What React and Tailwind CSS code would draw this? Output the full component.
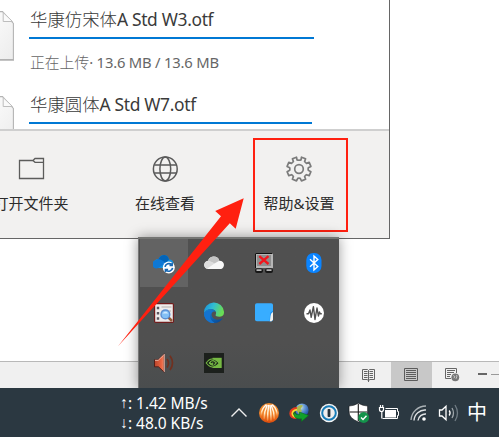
import React from "react";

const FONT = "font-['Noto_Sans','Noto_Sans_CJK_SC',sans-serif]";

function FileIcon() {
  return (
    <svg width="15" height="50" viewBox="0 0 15 50" className="block shrink-0">
      <defs>
        <linearGradient id="paper" x1="0" y1="0" x2="1" y2="1">
          <stop offset="0" stopColor="#fff" />
          <stop offset="1" stopColor="#ececec" />
        </linearGradient>
      </defs>
      <path d="M-20 .6H2.5L13.4 12.5V48.5H-20z" fill="url(#paper)" stroke="#b4b4b4" strokeWidth="1.1" />
      <path d="M3.2 1.5V10.5H12.5z" fill="#fafafa" stroke="#bdbdbd" strokeWidth="1" />
      <path d="M-2 49.2H14" stroke="#aaa" strokeWidth="1" />
    </svg>
  );
}

function FileName({ cjk, latin }) {
  return (
    <div className="h-[26px] text-[17.4px] leading-[26px] whitespace-nowrap text-[#3a3a3a]">
      <span className="font-light">{cjk}</span>
      <span className="tracking-[-0.33px]">{latin}</span>
    </div>
  );
}

function FolderIcon() {
  return (
    <svg width="28" height="28" viewBox="0 0 28 28" fill="none" stroke="#5c5c5b" strokeWidth="1.3">
      <path d="M2.5 5.5H16L18 3.5H26.5V23.5H2.5z" />
      <path d="M16 5.5L18 7.3H26.5" />
    </svg>
  );
}

function GlobeIcon() {
  return (
    <svg width="28" height="28" viewBox="0 0 28 28" fill="none" stroke="#5a5a5a" strokeWidth="1.5">
      <circle cx="14.3" cy="14" r="11.9" />
      <ellipse cx="14.3" cy="14" rx="5.4" ry="11.9" />
      <path d="M3.3 10H25.3M3.3 18H25.3" />
    </svg>
  );
}

function GearIcon() {
  return (
    <svg width="28" height="28" viewBox="0 0 28 28" fill="none" stroke="#7b7b7b" strokeWidth="1.7" strokeLinejoin="round">
      <path d="M11.5 2.2L12 4.9Q14 5.6 16 4.9L16.5 2.2L20.6 3.8L19.6 6.5Q20.5 7.6 21.5 8.4L24.2 7.4L25.9 11.4L23.3 12.8Q22.9 14 23.3 15.3L25.9 16.7L24.2 20.6L21.4 19.7Q20.4 20.5 19.6 21.5L20.6 24.3L16.5 25.9L15.2 23.3Q14 22.9 12.8 23.3L11.5 25.9L7.4 24.3L8.4 21.5Q7.6 20.5 6.6 19.7L3.8 20.6L2.1 16.7L4.7 15.3Q5.1 14 4.7 12.8L2.1 11.4L3.8 7.4L6.5 8.4Q7.5 7.6 8.4 6.5L7.4 3.8z" />
      <circle cx="14" cy="14" r="4.3" />
    </svg>
  );
}

function FooterAction({ icon, label }) {
  return (
    <div className="flex h-[94px] w-[94px] shrink-0 flex-col items-center pt-[17px]">
      {icon}
      <span className="mt-[9px] text-[15px] leading-[22px] whitespace-nowrap text-[#2b2b2b]">{label}</span>
    </div>
  );
}

function Panel() {
  return (
    <section className="flex h-[239px] w-[390px] flex-col overflow-hidden border-r border-b border-[#666] bg-white">
      <div className="flex h-[129px] flex-col overflow-hidden">
        <div className="flex h-[85px] shrink-0 pt-[6px]">
          <div className="w-[29px] shrink-0 pt-[5px]"><FileIcon /></div>
          <div className="flex w-[285px] flex-col">
            <div className="pl-[1px]">
              <FileName cjk="华康仿宋体" latin="A Std W3.otf" />
            </div>
            <div className="mt-[5px] h-[2px] bg-[#0078d4]" />
            <div className="mt-[12px] h-[22px] pl-[1px] text-[14.8px] leading-[22px] whitespace-nowrap text-[#666]">
              <span className="font-light">正在上传</span><span className="tracking-[-0.2px]">· 13.6 MB / 13.6 MB</span>
            </div>
          </div>
        </div>
        <div className="flex h-[60px] shrink-0 pt-[6px]">
          <div className="w-[29px] shrink-0 pt-[5px]"><FileIcon /></div>
          <div className="flex w-[283px] flex-col">
            <div className="pl-[1px]">
              <FileName cjk="华康圆体" latin="A Std W7.otf" />
            </div>
            <div className="mt-[5px] h-[2px] bg-[#0078d4]" />
          </div>
        </div>
      </div>
      <footer className="flex h-[109px] border-t-2 border-[#cfcfcf] bg-[#f2f1f0] pt-[7px]">
        <div className="-ml-[16px] flex">
          <FooterAction icon={<FolderIcon />} label="打开文件夹" />
          <div className="ml-[40px]"><FooterAction icon={<GlobeIcon />} label="在线查看" /></div>
          <div className="ml-[41px] h-[94px] w-[95px] border-2 border-[#ff2010]">
            <div className="-mt-[2px] -ml-[3px]"><FooterAction icon={<GearIcon />} label="帮助&设置" /></div>
          </div>
        </div>
      </footer>
    </section>
  );
}

function Svg({ children }) {
  return <svg width="22" height="22" viewBox="0 0 22 22" className="block">{children}</svg>;
}

function OneDriveSync() {
  return (
    <Svg>
      <path d="M4 16A4 4 0 0 1 1.5 8.8C3 7 5 7 5.5 7C7.5 1.5 15 2 16 7.4C20 7.2 21.5 11 20 14L14 16z" fill="#1490df" />
      <path d="M5.5 7C8 1.5 15 2 16 7.4L13 11L4 7.4z" fill="#0364b8" />
      <path d="M1.5 8.8C5 6 8 7 13 11L5 16A4 4 0 0 1 1.5 8.8z" fill="#0f78d4" />
      <circle cx="15.8" cy="15.4" r="6" fill="#fff" />
      <g fill="none" stroke="#1768b4" strokeWidth="1.7">
        <path d="M12 14.9A3.9 3.9 0 0 1 18.6 12.7M19.6 15.9A3.9 3.9 0 0 1 13 18.1" />
        <path d="M19.1 10.7V13.3H16.5M12.5 20.1V17.5H15.1" />
      </g>
    </Svg>
  );
}

function Cloud() {
  return (
    <Svg>
      <path d="M5 17A4 4 0 0 1 1.5 11.5C2.5 9 5 8.8 5 8.8C7 3 15 3.4 16.3 8.7C20 8.7 21.5 11.5 20.8 14C20.2 16.5 18.5 17 17 17z" fill="#f8f8f8" />
      <path d="M5 8.8C7 3 15 3.4 16.3 8.7L11.5 11.5z" fill="#c5c5c5" />
      <path d="M1.5 11.5C3 8 7.5 8.3 11.5 11.5L4 16.8C1.5 16 .8 13.5 1.5 11.5z" fill="#dedede" />
    </Svg>
  );
}

function NetworkError() {
  return (
    <Svg>
      <path d="M2 1H20V16H2z" fill="#b5b5b5" />
      <path d="M2.5 16V1.5H19.5" fill="none" stroke="#111" />
      <path d="M4 3H18V14H4z" fill="#8e8e8e" />
      <path d="M6.3 4.2L15.5 12M15.5 4.2L6.3 12" stroke="#f3151b" strokeWidth="2.3" />
      <rect x="2" y="16.5" width="8" height="4.5" rx="2" fill="#171717" />
      <rect x="12" y="16.5" width="8" height="4.5" rx="2" fill="#171717" />
      <path d="M3.5 18.2H8.5M13.5 18.2H18.5" stroke="#b5b5b5" strokeWidth="1.8" />
    </Svg>
  );
}

function Bluetooth() {
  return (
    <Svg>
      <rect x="3.3" y="1" width="15.2" height="20" rx="7" fill="#0a84ff" />
      <path d="M7 7.3L14.8 14.5L11 18V4L14.8 7.5L7 14.7" fill="none" stroke="#fff" strokeWidth="1.4" />
    </Svg>
  );
}

function ListSearch() {
  return (
    <Svg>
      <rect x="1.6" y="1.6" width="18.8" height="18.8" rx="1" fill="#eeeceb" stroke="#701c1c" strokeWidth="1.2" />
      <path d="M3.8 6H6.2M3.8 11.2H6.2M3.8 16.5H6.2" stroke="#5a5560" strokeWidth="2.4" />
      <path d="M8.5 5H18.5M8.5 9H18" stroke="#b2adab" strokeWidth="1.1" />
      <path d="M15.5 15.5L19 19" stroke="#925c39" strokeWidth="2.5" />
      <circle cx="12.4" cy="12.4" r="4.4" fill="#83c0f5" stroke="#5a8ed2" strokeWidth="1.4" />
      <path d="M9.5 11.5C11 9.3 14 9.3 15.2 11.5z" fill="#d1eaff" />
    </Svg>
  );
}

function Edge() {
  return (
    <Svg>
      <defs>
        <linearGradient id="edgeTop" x1="0" y1="0" x2="1" y2=".3">
          <stop stopColor="#168de0" /><stop offset=".5" stopColor="#31bdd2" /><stop offset="1" stopColor="#69dc56" />
        </linearGradient>
        <linearGradient id="edgeBottom" x1="0" y1="0" x2="1" y2="1">
          <stop stopColor="#1988db" /><stop offset="1" stopColor="#07438f" />
        </linearGradient>
      </defs>
      <path d="M1 11A10 10 0 0 1 21 9.8C21.4 14 17.5 15.7 13.5 14.3C11.5 13.5 13.5 12.5 13 10.3C12.2 6.5 4 5.5 1 11z" fill="url(#edgeTop)" />
      <path d="M1 11C3 5.5 11.7 5.9 13 10C9.5 8.2 7.4 12 9.3 15C11.4 18.4 16.3 18.5 20 15.8C17.2 21.1 11.2 22.3 6.2 19.8C2.7 18 .9 14.7 1 11z" fill="url(#edgeBottom)" />
      <path d="M10 9.5C6 11 6 17.8 11.5 20.8C7.5 22 1 18 1.1 11.7C3.5 8 7.3 7.8 10 9.5z" fill="#1474d1" />
    </Svg>
  );
}

function StickyNote() {
  return (
    <Svg>
      <rect x="2" y="1.2" width="18" height="18" rx="1.8" fill="#38adff" />
      <path d="M16.6 19.2C17.4 16 16.2 11 18.5 9.8Q19.4 9.5 20 9V17.8L18.6 19.2z" fill="#178cec" />
      <path d="M16.8 19.2C17.8 16 16.8 11.3 20 10V17.8L18.6 19.2z" fill="#f2f1ed" />
    </Svg>
  );
}

function Waveform() {
  return (
    <Svg>
      <circle cx="11" cy="11" r="10" fill="#fff" />
      <path d="M3.5 11.8H5.5L7 8L8.2 15.3L10.4 4.6L12 17.5L14 6L15.4 14L16.5 10L17.2 11.8H18.8" fill="none" stroke="#505050" strokeWidth="1.4" strokeLinejoin="round" />
    </Svg>
  );
}

function Speaker() {
  return (
    <Svg>
      <defs>
        <linearGradient id="horn"><stop stopColor="#b8442b" /><stop offset=".7" stopColor="#ea6340" /><stop offset="1" stopColor="#f08a68" /></linearGradient>
      </defs>
      <path d="M1.5 7.8H5L11.2 1.8V20.2L5.5 14.8H1.5z" fill="url(#horn)" stroke="#4c1a15" strokeWidth=".9" />
      <path d="M2 8.3H5.2L10.6 3" fill="none" stroke="#f7c6b6" strokeWidth=".9" />
      <path d="M11.3 2V20" stroke="#f4cfc4" strokeWidth=".8" />
      <path d="M14 7Q17 11 14 15.5M17 3.8Q22 11 17 18" fill="none" stroke="#71301f" strokeWidth="1.7" />
    </Svg>
  );
}

function Nvidia() {
  return (
    <Svg>
      <rect x="1" y="1" width="20" height="20" fill="#1c201c" />
      <path d="M9.5 5.8H18.7V16H9.5z" fill="#76b943" />
      <path d="M3.2 11Q8.5 3 16.3 11Q9.5 19 3.2 11z" fill="#1d291b" stroke="#76b943" strokeWidth="1.1" />
      <path d="M6 11Q10 6 13.5 11Q10 15.5 6 11z" fill="#75b744" stroke="#75b744" />
      <path d="M8 11Q9.5 8.8 11.5 11L10 12.5" fill="none" stroke="#1d291b" strokeWidth="1.2" />
    </Svg>
  );
}

const trayIcons = [OneDriveSync, Cloud, NetworkError, Bluetooth, ListSearch, Edge, StickyNote, Waveform, Speaker, Nvidia];

function TrayPopup() {
  return (
    <div className="absolute top-[237px] left-[138px] h-[151px] w-[201px] border-t-2 border-l border-t-[#747573] border-l-[#777] bg-linear-to-b from-[#505050] from-70% to-[#4a4d4e] shadow-[0_0_12px_rgba(0,0,0,0.4)]">
      <div className="grid grid-cols-[repeat(4,50px)] grid-rows-[repeat(3,50px)]">
        {trayIcons.map((Icon, i) => (
          <div key={i} className={`ml-px flex h-[48px] w-[48px] items-center justify-center ${i === 0 ? "bg-[#636363]" : ""}`}>
            <Icon />
          </div>
        ))}
      </div>
    </div>
  );
}

function StatusBar() {
  return (
    <div className="flex h-[27px] items-stretch justify-end border-t border-[#b8b8b8] bg-[#f0f0f0]">
      <div className="flex w-[42px] items-center justify-center pr-[2px] pb-px">
        <svg width="14" height="14" viewBox="0 0 14 14" fill="none" stroke="#666" strokeWidth="1">
          <path d="M.5 1.5H5.5L6.5 2.5L7.5 1.5H12.5V11.5H8L6.5 12.5L5 11.5H.5zM6.5 2.5V14M2 3.5H5.5M2 5.5H5.5M2 7.5H5.5M2 9.5H5.5M7.5 3.5H11M7.5 5.5H11M7.5 7.5H11M7.5 9.5H11" />
        </svg>
      </div>
      <div className="flex w-[41px] items-center justify-center bg-[#c8c8c8] pr-px pb-px">
        <svg width="14" height="14" viewBox="0 0 14 14" fill="none" stroke="#5c5c5c">
          <path d="M.5 .5H13.5V12.5H.5zM2 2.5H12M2 4.5H12M2 6.5H12M2 8.5H12M2 10.5H12" />
        </svg>
      </div>
      <div className="flex w-[42px] items-center justify-center pr-[2px] pb-px">
        <svg width="15" height="14" viewBox="0 0 15 14" fill="none" stroke="#666">
          <path d="M6 10.5H.5V.5H11.5V5M2 2.5H10M2 4.5H9M2 6.5H6M2 8.5H5" />
          <circle cx="10.3" cy="9.3" r="3.9" fill="#777" stroke="none" />
          <path d="M8.3 7.5L9.8 8.5L9 10.2M11.7 7L11.8 8.6L11 10.8" stroke="#ddd" strokeWidth=".8" />
        </svg>
      </div>
      <div className="flex w-[25px] items-center pb-[2px] pl-[4px]">
        <div className="h-[2px] w-[9px] bg-[#666]" />
        <div className="ml-[4px] h-px w-[8px] bg-[#999]" />
      </div>
    </div>
  );
}

function Shield() {
  return (
    <Svg>
      <path d="M1 4Q6 4 10.3 1.2Q15 4 19.6 4V10Q19.6 16 10.3 20Q1 16 1 10z" fill="#fff" stroke="#101417" strokeWidth=".6" />
      <path d="M10.3 2V19M1.5 10H19" stroke="#171717" strokeWidth="1.1" />
      <circle cx="15.7" cy="15.5" r="5.4" fill="#14934b" />
      <path d="M13 15.5L15 17.4L18.5 13.7" fill="none" stroke="#fff" strokeWidth="1.4" />
    </Svg>
  );
}

function Taskbar() {
  return (
    <div className="flex h-[49px] items-center bg-[#2b3841] text-white">
      <div className="ml-[120px] w-[109px] text-[15.5px] leading-[20px] whitespace-nowrap">
        <div className="flex"><Arrow /><span className="tracking-[-0.05px]">: 1.42 MB/s</span></div>
        <div className="flex"><Arrow down /><span className="tracking-[-0.05px]">: 48.0 KB/s</span></div>
      </div>
      <div className="flex w-[270px] items-center">
        <div className="w-[29px]">
          <svg width="20" height="22" viewBox="0 0 20 22"><path d="M2.5 14.5L10 7L17.5 14.5" fill="none" stroke="#eee" strokeWidth="1.4" /></svg>
        </div>
        <div className="w-[30px]">
          <Svg>
            <defs>
              <linearGradient id="orb" x1="0" y1="0" x2="0" y2="1">
                <stop stopColor="#f0892c" /><stop offset=".5" stopColor="#f2842a" /><stop offset="1" stopColor="#dc4a0c" />
              </linearGradient>
              <linearGradient id="streak" x1="0" y1="0" x2="0" y2="1">
                <stop stopColor="#fff" /><stop offset=".6" stopColor="#ffeccb" /><stop offset="1" stopColor="#f58a35" />
              </linearGradient>
            </defs>
            <circle cx="11" cy="11" r="10" fill="url(#orb)" />
            <g fill="none" stroke="url(#streak)" strokeWidth="1.5" strokeLinecap="round">
              <path d="M8 3Q3.5 7 3.2 13" />
              <path d="M9 3.5Q6 10 6.2 16.5" />
              <path d="M10.6 3.5Q9.5 11 9.6 18" />
              <path d="M12 3.5Q13.2 11 13 18" />
              <path d="M13.3 3.5Q16.4 10 16.2 16.5" />
              <path d="M14.5 3Q19 7 19 13" />
            </g>
          </Svg>
        </div>
        <div className="w-[30px]">
          <Svg>
            <defs>
              <radialGradient id="planet" cx=".4" cy=".3" r=".7">
                <stop stopColor="#d8e8d0" /><stop offset=".4" stopColor="#6d9fd8" /><stop offset="1" stopColor="#1c4fa5" />
              </radialGradient>
            </defs>
            <circle cx="14" cy="8" r="6.6" fill="url(#planet)" />
            <path d="M9 5Q12 2 15 3.5L12.5 7L14 9L11 12Q8 9 9 5z" fill="#a9b94e" />
            <path d="M9 5Q1.5 5.5 1.3 11.5Q1.5 17 9 17L7 15Q3.5 14.5 4 11Q5 8 9 7.5z" fill="#e33d20" />
            <path d="M9 7.6Q4.3 8.6 4.3 11.8Q5 15 9 15" fill="none" stroke="#f7dc32" strokeWidth="1.7" />
            <path d="M6.5 10Q7 13 11.5 12.8V10L20.5 13.5L13.5 19.5V16.8Q6 17.5 5.8 12z" fill="#11a02b" stroke="#08701b" strokeWidth=".6" />
          </Svg>
        </div>
        <div className="w-[30px]">
          <Svg>
            <circle cx="11" cy="11" r="9.2" fill="#f4f4f4" />
            <circle cx="11" cy="11" r="6.8" fill="#eee" stroke="#187cb7" strokeWidth="2" />
            <rect x="9.6" y="7" width="2.8" height="8" rx=".8" fill="#25313a" />
          </Svg>
        </div>
        <div className="w-[30px]"><Shield /></div>
        <div className="w-[32px]">
          <svg width="22" height="22" viewBox="0 0 22 22" fill="none" stroke="#fff">
            <rect x="7" y="8" width="11" height="7.5" fill="#fff" stroke="none" />
            <path d="M4.5 16.5H19.5V13.5H20.5V9.5H19.5V6.5H7.5" />
            <path d="M1.5 5.5V7.5Q1.5 9.5 3.5 9.5Q5.5 9.5 5.5 7.5V5.5zM2.5 3V5M4.7 3V5M3.8 9.5V16.5" strokeWidth="1.2" />
          </svg>
        </div>
        <div className="w-[28px]">
          <svg width="20" height="22" viewBox="0 0 20 22" fill="none">
            <path d="M1 18A15 15 0 0 1 16 4" stroke="#aab1b5" strokeWidth="1.3" />
            <path d="M4 18.5A11 11 0 0 1 16 8M8 18.5A7.5 7.5 0 0 1 16 12" stroke="#e0e3e5" strokeWidth="1.4" />
            <circle cx="14" cy="17" r="1.8" fill="#fff" />
          </svg>
        </div>
        <div className="w-[29px]">
          <svg width="22" height="22" viewBox="0 0 22 22" fill="none" stroke="#fff" strokeWidth="1.3">
            <path d="M1.5 8H4L8 4.3V17.7L4 14H1.5z" />
            <path d="M11.2 8.5Q13 11 11.2 13.5" />
            <path d="M14 6Q17 11 14 16" stroke="#9ca4a9" />
            <path d="M17 3Q22 11 17 19" stroke="#717d85" />
          </svg>
        </div>
        <span className="text-[20px] leading-[28px]">中</span>
      </div>
    </div>
  );
}

/* Half-width arrow glyph so that it sits tight against the colon. */
function Arrow({ down = false }) {
  return (
    <span className="flex w-[8px] justify-center overflow-visible font-['Liberation_Sans','Noto_Sans_CJK_SC',sans-serif]">
      {down ? "↓" : "↑"}
    </span>
  );
}

export default function App() {
  return (
    <div className={`relative flex h-[437px] w-[499px] flex-col overflow-hidden bg-white ${FONT}`}>
      <main className="h-[361px]">
        <Panel />
      </main>
      <StatusBar />
      <TrayPopup />
      <div className="relative"><Taskbar /></div>
      <svg className="pointer-events-none absolute inset-0" width="499" height="437" viewBox="0 0 499 437">
        <path d="M118 346.3L221 216.2L215.2 211L243.7 198.3L235.7 228.8L229.8 223.3Z" fill="#ff2010" />
      </svg>
    </div>
  );
}
